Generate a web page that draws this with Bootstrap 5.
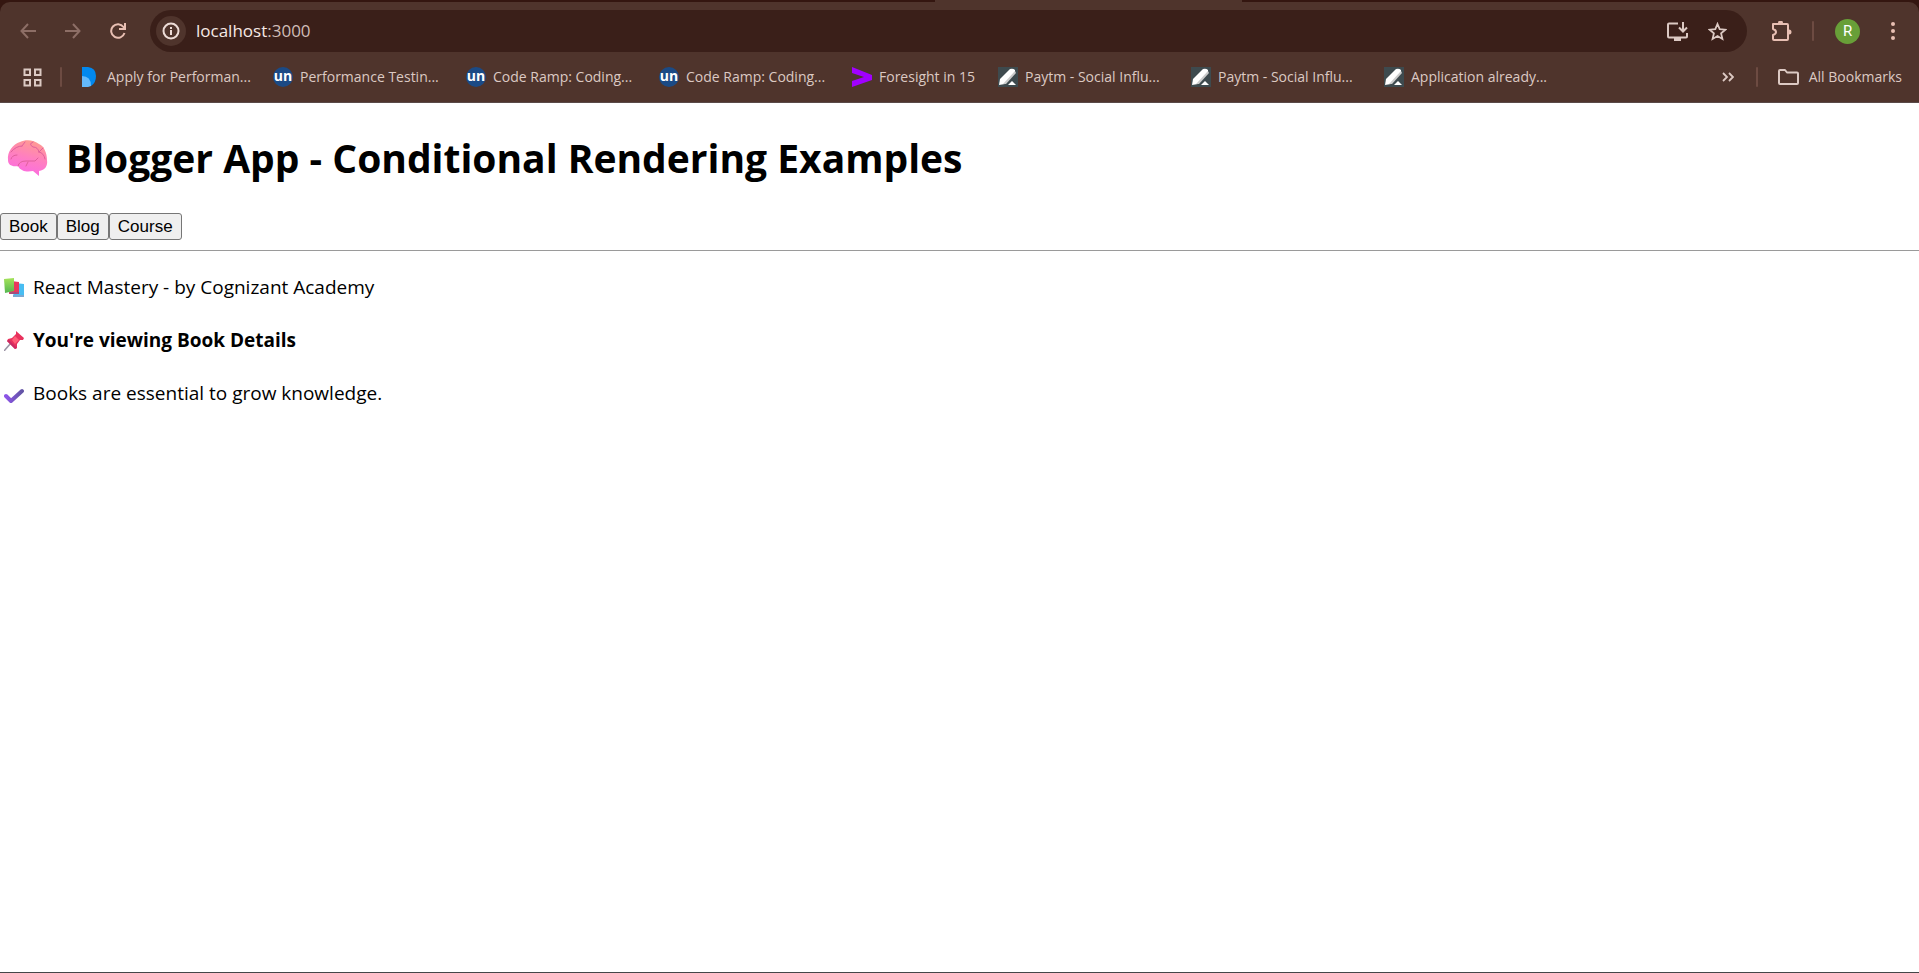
<!DOCTYPE html>
<html lang="en">
<head>
<meta charset="utf-8">
<meta name="viewport" content="width=device-width, initial-scale=1">
<title>Blogger App</title>
<link href="https://cdn.jsdelivr.net/npm/bootstrap@5.3.0/dist/css/bootstrap.min.css" rel="stylesheet">
<style>
body{font-family:"Open Sans","Noto Sans",sans-serif;font-size:19px;line-height:27px;color:#000;border-bottom:1px solid #444648}
.browser{background:#341610}
.tab-strip{height:2px}
.tab-left{width:48.7%}
.tab-active{width:307px;background:#4f342c}
.toolbar{background:#4f342c;border-radius:10px 10px 0 0;border-bottom:1px solid #5a4a48;color:#dcc9c3}
.nav-row{padding:8px 4px 0 5px}
.tool{width:45px;height:42px;border:0;background:none;padding:0;color:#e8bfb3}
.tool:disabled{color:#8d6e66}
.profile{margin-left:11px}
.omnibox{height:42px;border-radius:21px;background:#3a1f19;margin:0 12px 0 10px;padding:0 10px 0 6px}
.site-info{width:30px;height:30px;border:0;border-radius:50%;background:#4f342c;color:#eddcd7;padding:0}
.address{font-size:17px;line-height:24px;color:#d0bdb7;margin-left:10px}
.address b{font-weight:400;color:#f6e9e5}
.address input{position:absolute;inset:0;width:100%;opacity:0;border:0}
.omni-btn{width:40px;height:40px;border:0;background:none;color:#dcc9c3;padding:0}
.divider{width:2px;height:20px;border-radius:1px;background:#6d4b42}
.avatar{width:25px;height:25px;border-radius:50%;background:#689f38;color:#fff;font:15px/25px Roboto,sans-serif}
.mark-row{height:50px;padding:0 17px 0 23px;font-size:14px;line-height:20px}
.mark-row a{color:#dcc9c3;text-decoration:none;white-space:nowrap}
.apps-divider{margin-left:18px}
.more-divider{margin:0 20px 0 22px}
.all-marks{gap:10px}
.mark-list{margin-left:18px}
.mark-item{width:193px;gap:7px}
.mark-item.fit-item{width:146px}
.page-title{font-size:39px;line-height:54px;font-weight:700;margin:28px 0;padding-left:5px;gap:16px}
.view-btn{font:17px/19px "Liberation Sans",sans-serif;color:#000;background:#efefef;border:1px solid #767676;border-radius:3px;padding:3px 8px}
.rule{margin:10px 0 23px;border-top:1px solid #9a9a9a;opacity:1}
.line{margin:0 0 26px;padding-left:4px;gap:9px}
svg{display:block;flex:none}
button svg{margin:auto}
</style>
</head>
<body class="min-vh-100 bg-white">
<svg width="0" height="0" class="position-absolute" aria-hidden="true">
<defs>
<symbol id="pen" viewBox="0 0 20 20"><rect width="20" height="20" fill="#3e4a4e"/><path d="M1 18 2 12 12 2q3-1 5 1v2L7 17z" fill="#fff"/><path d="M5 17 17 4l1 2L8 17z" fill="#ccc"/><path d="M10 18l4-4 4 4z" fill="#fff"/></symbol>
<symbol id="un" viewBox="0 0 20 20"><circle cx="10" cy="10" r="10" fill="#1b4a85"/><text x="10" y="14" text-anchor="middle" font-family="Open Sans" font-weight="700" font-size="14" fill="#fff">un</text></symbol>
</defs>
</svg>
<header class="browser">
<div class="tab-strip d-flex"><div class="tab-left"></div><div class="tab-active"></div></div>
<div class="toolbar">
<div class="nav-row d-flex align-items-center">
<button class="tool" disabled aria-label="Back"><svg width="16" height="16" viewBox="0 0 16 16" fill="none" stroke="currentColor" stroke-width="2"><path d="M16 8H2M8 1 1.500 8 8 15"/></svg></button>
<button class="tool" disabled aria-label="Forward"><svg width="16" height="16" viewBox="0 0 16 16" fill="none" stroke="currentColor" stroke-width="2"><path d="M0 8h14M8 1l6.500 7L8 15"/></svg></button>
<button class="tool" aria-label="Reload"><svg width="16" height="16" viewBox="0 0 16 16" fill="none" stroke="currentColor" stroke-width="2"><path d="M14.500 10A6.800 6.800 0 1 1 13.500 4l1.500 2M15 0v6H9"/></svg></button>
<div class="omnibox d-flex align-items-center flex-grow-1">
<button class="site-info" aria-label="Site information"><svg width="18" height="18" viewBox="0 0 18 18" fill="none" stroke="currentColor" stroke-width="2"><circle cx="9" cy="9" r="7.500"/><path d="M9 8v5M9 5v2"/></svg></button>
<label class="address position-relative flex-grow-1"><b>localhost</b>:3000<input type="text" aria-label="Address"></label>
<button class="omni-btn" aria-label="Install app"><svg width="21" height="19" viewBox="0 0 21 19" fill="none" stroke="currentColor" stroke-width="2"><path d="M11 1.500H2q-1 0-1 1v12q0 1 1 1h17q1 0 1-1V11M16 0v9M12 5.500l4 4 4-4"/><path d="M7 16h7v3H7z" fill="currentColor" stroke="none"/></svg></button>
<button class="omni-btn" aria-label="Bookmark this page"><svg width="19" height="19" viewBox="0 0 19 19" fill="none" stroke="currentColor" stroke-width="1.800"><path d="M9.500 2l2.200 5.200 5.600.5-4.200 3.700 1.300 5.500-4.900-2.900-4.900 2.900 1.300-5.500L1.700 7.700l5.600-.5z"/></svg></button>
</div>
<button class="tool" aria-label="Extensions"><svg width="21" height="21" viewBox="0 0 21 21" fill="none" stroke="currentColor" stroke-width="2"><path d="M2 3h14q1 0 1 1v14q0 1-1 1H3q-1 0-1-1v-4q3-1 3-3T2 8z" stroke-linejoin="round"/><path d="M7 2a2.500 2.500 0 0 1 5 0zM18 8.500a2.500 2.500 0 0 1 0 5z" fill="currentColor" stroke="none"/></svg></button>
<div class="divider ms-2"></div>
<button class="tool profile" aria-label="Profile"><span class="avatar d-block mx-auto">R</span></button>
<button class="tool" aria-label="Menu"><svg width="4" height="18" viewBox="0 0 4 18" fill="currentColor"><circle cx="2" cy="2" r="2"/><circle cx="2" cy="9" r="2"/><circle cx="2" cy="16" r="2"/></svg></button>
</div>
<nav class="mark-row d-flex align-items-center" aria-label="Bookmarks">
<a href="#" aria-label="Apps"><svg width="19" height="19" viewBox="0 0 19 19" fill="none" stroke="currentColor" stroke-width="2"><path d="M1.500 1.500h5.500v5.500H1.500zM12 1.500h5.500v5.500H12zM1.500 12h5.500v5.500H1.500zM12 12h5.500v5.500H12z"/></svg></a>
<div class="divider apps-divider"></div>
<div class="mark-list d-flex">
<a href="#" class="mark-item d-flex align-items-center"><svg width="20" height="20" viewBox="0 0 20 20"><path d="M2 0h6q8 1 8 9 0 7-5 10l-9 1z" fill="#0288ee"/><path d="M2 9q9 0 9 10l-3 1H2z" fill="#64b9fb"/></svg><span>Apply for Performan...</span></a>
<a href="#" class="mark-item d-flex align-items-center"><svg width="20" height="20"><use href="#un"/></svg><span>Performance Testin...</span></a>
<a href="#" class="mark-item d-flex align-items-center"><svg width="20" height="20"><use href="#un"/></svg><span>Code Ramp: Coding...</span></a>
<a href="#" class="mark-item d-flex align-items-center"><svg width="20" height="20"><use href="#un"/></svg><span>Code Ramp: Coding...</span></a>
<a href="#" class="mark-item fit-item d-flex align-items-center"><svg width="20" height="20" viewBox="0 0 20 20"><path d="M0 0l20 8v5L0 20v-6l12-4L0 6z" fill="#a100ff"/></svg><span>Foresight in 15</span></a>
<a href="#" class="mark-item d-flex align-items-center"><svg width="20" height="20"><use href="#pen"/></svg><span>Paytm - Social Influ...</span></a>
<a href="#" class="mark-item d-flex align-items-center"><svg width="20" height="20"><use href="#pen"/></svg><span>Paytm - Social Influ...</span></a>
<a href="#" class="mark-item d-flex align-items-center"><svg width="20" height="20"><use href="#pen"/></svg><span>Application already...</span></a>
</div>
<div class="d-flex align-items-center ms-auto">
<a href="#" aria-label="More bookmarks"><svg width="12" height="10" viewBox="0 0 12 10" fill="none" stroke="currentColor" stroke-width="1.800"><path d="M1 1l4 4-4 4M7 1l4 4-4 4"/></svg></a>
<div class="divider more-divider"></div>
<a href="#" class="all-marks d-flex align-items-center"><svg width="21" height="16" viewBox="0 0 21 16" fill="none" stroke="currentColor" stroke-width="2" stroke-linejoin="round"><path d="M1 2q0-1 1-1h5l2 2.500h10q1 0 1 1V14q0 1-1 1H2q-1 0-1-1z"/></svg><span>All Bookmarks</span></a>
</div>
</nav>
</div>
</header>
<main>
<h1 class="page-title d-flex align-items-center">
<svg width="45" height="40" viewBox="0 0 45 40" role="img" aria-label="Brain"><defs><linearGradient id="brain" x1=".7" y1="0" x2=".4" y2="1"><stop offset="0" stop-color="#ff9c8f"/><stop offset=".5" stop-color="#ff7fc0"/><stop offset="1" stop-color="#fb6ae6"/></linearGradient></defs><path d="M3 22C2 14 8 6 15 4 21 1 29 2 34 6c5 2 8 9 8 16 1 6-2 10-8 11v5l-6-5c-5 1-12 1-15-5C7 29 3 27 3 22z" fill="url(#brain)"/><g fill="none" stroke="#e0609c" stroke-width="1" stroke-linecap="round"><path d="M6 14q5-6 11-6M17 8l3-4M28 4q-5 2 0 5 5 0 6 5M34 14l4-4M34 14q5 1 6 7M13 28q1-5 8-5h9l3-3M23 24l-2 4M6 21q1-4 6-4"/></g></svg>
<span>Blogger App - Conditional Rendering Examples</span></h1>
<div class="d-flex"><button class="view-btn">Book</button><button class="view-btn">Blog</button><button class="view-btn">Course</button></div>
<hr class="rule">
<p class="line d-flex align-items-center"><svg width="20" height="20" viewBox="0 0 20 20" role="img" aria-label="Books"><defs><linearGradient id="bk" x2="0" y2="1"><stop stop-color="#a5e35a"/><stop offset="1" stop-color="#55b650"/></linearGradient></defs><path d="M11 5l9 1v13H9z" fill="#48bdf2"/><path d="M9 17h11v2H9z" fill="#79a9d2"/><path d="M7 3l8 1v12H5z" fill="#e9385f"/><path d="M5 14h10v2H6z" fill="#a84a79"/><path d="M0 1l10-1v13L1 15z" fill="url(#bk)"/></svg><span>React Mastery - by Cognizant Academy</span></p>
<p class="line fw-bold d-flex align-items-center"><svg width="20" height="20" viewBox="0 0 20 20" role="img" aria-label="Pushpin"><path d="M7 12l-7 8" stroke="#9b93a5" stroke-width="1.500"/><path d="M12 0l8 7-1 2-3 0-3 4v4l-2 1-8-8 1-2 4-1 4-4V2z" fill="#e8325d"/><path d="M11 5l4 4-4 4-3-4z" fill="#ff5d78"/><path d="M3 10l8 8 2-1-8-8z" fill="#c92a64"/></svg><span>You're viewing Book Details</span></p>
<p class="line d-flex align-items-center"><svg width="20" height="20" viewBox="0 0 20 20" role="img" aria-label="Check"><defs><linearGradient id="ck"><stop stop-color="#8d55e8"/><stop offset="1" stop-color="#6254a5"/></linearGradient></defs><path d="M2 12l5 5L18 7" fill="none" stroke="url(#ck)" stroke-width="4" stroke-linejoin="round" stroke-linecap="round"/></svg><span>Books are essential to grow knowledge.</span></p>
</main>
<script src="https://cdn.jsdelivr.net/npm/bootstrap@5.3.0/dist/js/bootstrap.bundle.min.js"></script>
</body>
</html>
